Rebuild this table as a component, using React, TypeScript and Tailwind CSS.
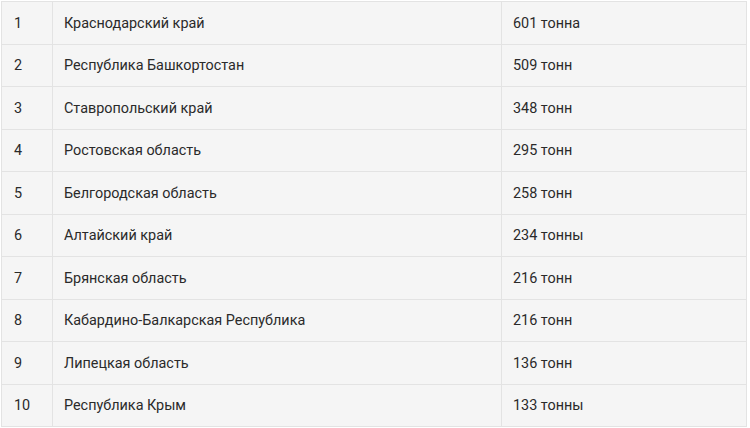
import React from "react";

const rows: [string, string, string][] = [
  ["1", "Краснодарский край", "601 тонна"],
  ["2", "Республика Башкортостан", "509 тонн"],
  ["3", "Ставропольский край", "348 тонн"],
  ["4", "Ростовская область", "295 тонн"],
  ["5", "Белгородская область", "258 тонн"],
  ["6", "Алтайский край", "234 тонны"],
  ["7", "Брянская область", "216 тонн"],
  ["8", "Кабардино-Балкарская Республика", "216 тонн"],
  ["9", "Липецкая область", "136 тонн"],
  ["10", "Республика Крым", "133 тонны"],
];

export default function App() {
  return (
    <div className="w-[750px] h-[428px] bg-white pt-px pl-px overflow-hidden">
      <table
        className="border-collapse bg-[#f5f5f5] text-[#2a2a2a] text-[14.4px]"
        style={{ fontFamily: "Roboto, 'Liberation Sans', sans-serif" }}
      >
        <tbody>
          {rows.map((r) => (
            <tr key={r[0]} className="h-[42.5px]">
              <td className="w-[51px] border border-[#e3e3e3] pl-[12px] pt-[2px] align-middle">{r[0]}</td>
              <td className="w-[449px] border border-[#e3e3e3] pl-[11px] pt-[2px] align-middle">{r[1]}</td>
              <td className="w-[245px] border border-[#e3e3e3] pl-[11px] pt-[2px] align-middle">{r[2]}</td>
            </tr>
          ))}
        </tbody>
      </table>
    </div>
  );
}
